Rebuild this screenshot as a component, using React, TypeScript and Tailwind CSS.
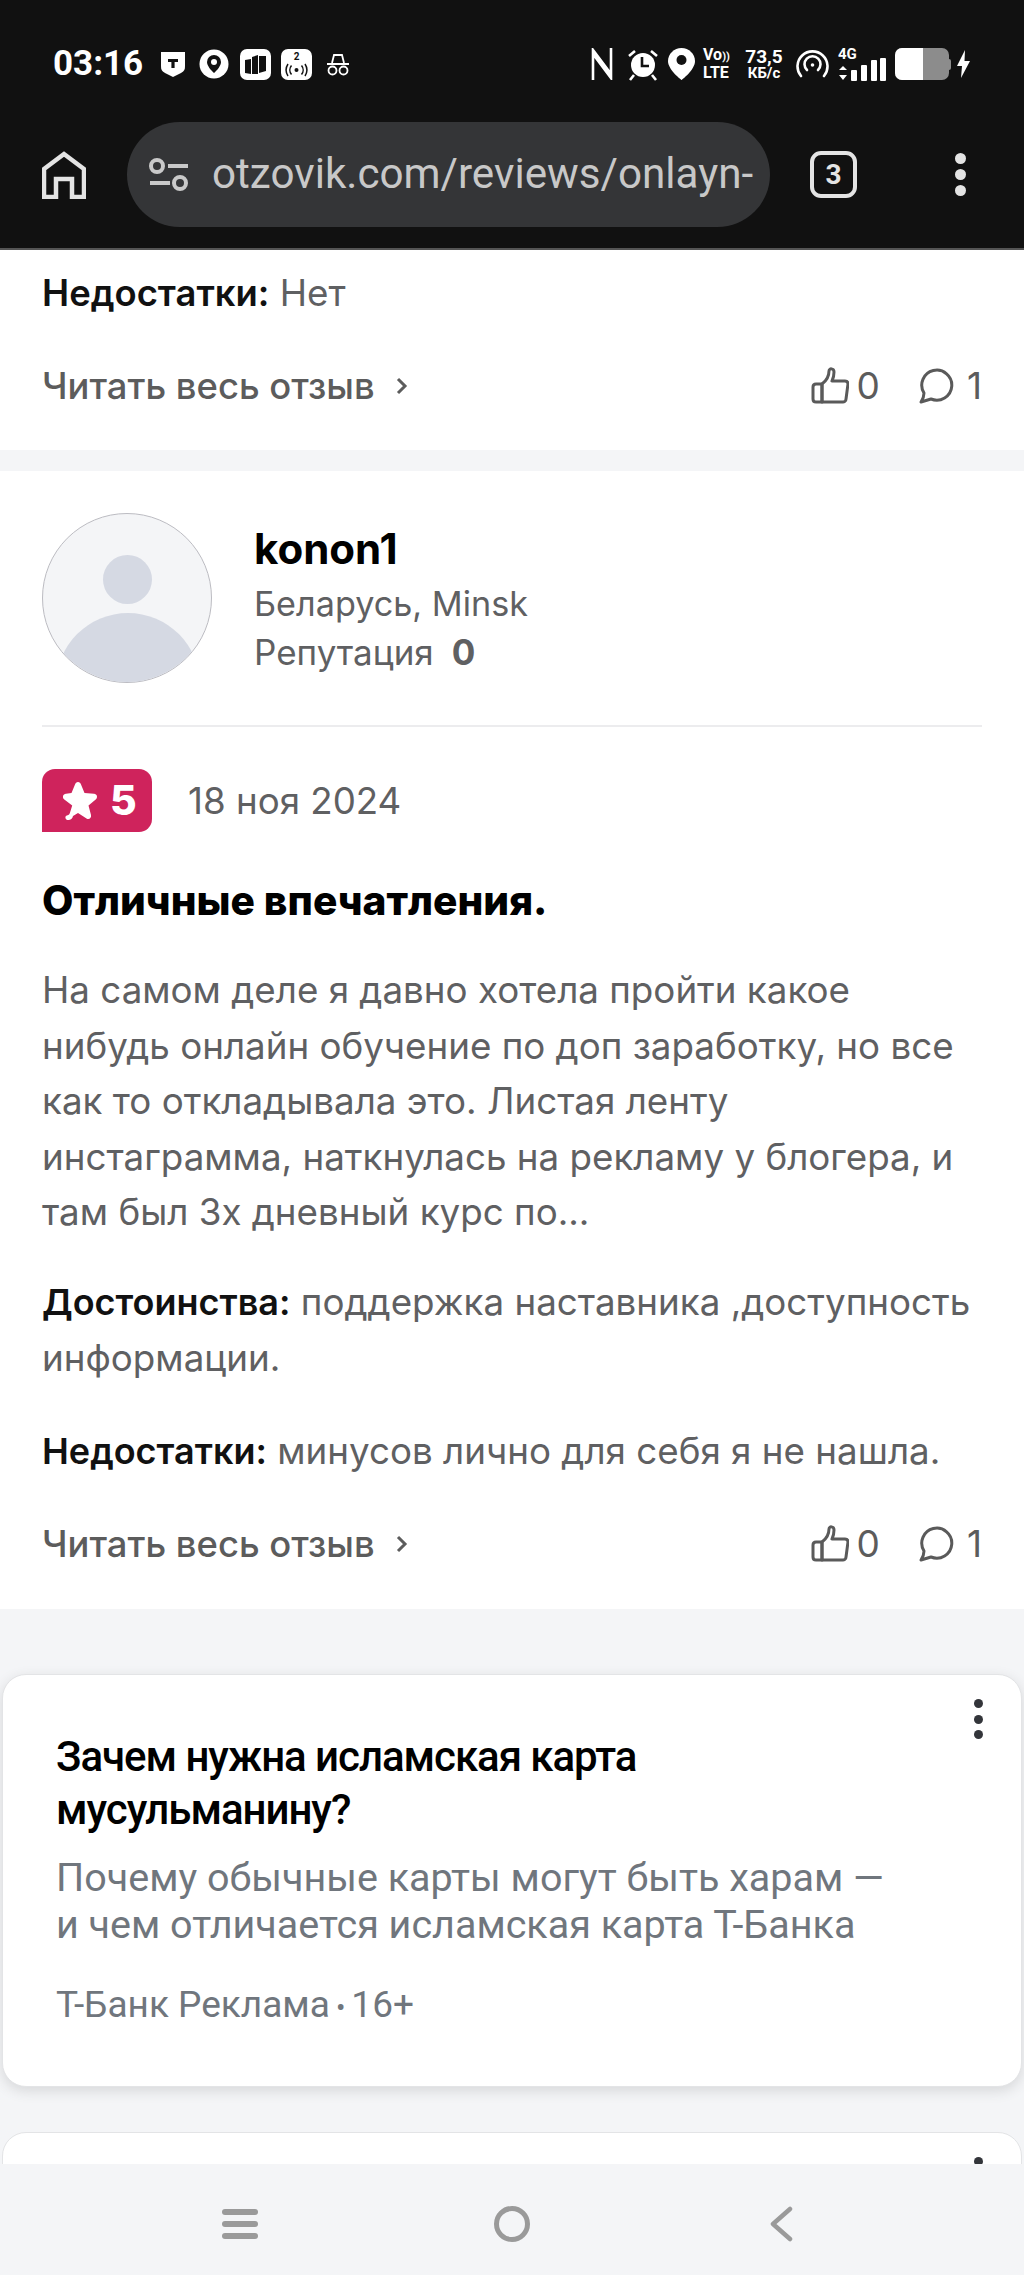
import React from 'react';

const inter = { fontFamily: 'Inter, "Noto Sans", sans-serif' };

const StatusLeftIcons = () => (
    <div className="flex items-center">
        {/* bank shield */}
        <svg width="26" height="28" viewBox="0 0 26 28" className="ml-[17px]">
            <path d="M1 2h24v14c0 4-1 5-4 7l-8 4-8-4c-3-2-4-3-4-7z" fill="#fff" />
            <path d="M8 9h10v3h-3.4v6h-3.2v-6H8z" fill="#111" />
        </svg>
        {/* location */}
        <svg width="30" height="30" viewBox="0 0 30 30" className="ml-[13px]">
            <circle cx="15" cy="15" r="14.5" fill="#fff" />
            <path d="M15 6a7 7 0 0 0-7 7c0 5 7 11 7 11s7-6 7-11a7 7 0 0 0-7-7z" fill="#111" />
            <circle cx="15" cy="13" r="3" fill="#fff" />
        </svg>
        {/* wallet tile */}
        <div className="ml-[11px] flex h-[31px] w-[31px] items-center justify-center rounded-[7px] bg-white">
            <svg width="23" height="21" viewBox="0 0 23 21">
                <path d="M1 6l6-1v15l-6-1zM8 3l6-2v19H8zM15 2h7v15l-7 2z" fill="#111" />
            </svg>
        </div>
        {/* broadcast tile */}
        <div className="relative ml-[10px] h-[31px] w-[31px] rounded-[7px] bg-white text-center">
            <span className="absolute left-0 right-0 top-[3px] text-[10px] font-bold leading-[10px] text-[#111]" style={{ fontFamily: 'Roboto' }}>2</span>
            <svg width="25" height="14" viewBox="0 0 25 14" className="absolute left-[3px] top-[14px]" fill="none" stroke="#111" strokeWidth="1.5">
                <circle cx="12.5" cy="7" r="2" fill="#111" stroke="none" />
                <path d="M7.5 2.5a7 7 0 0 0 0 9M17.5 2.5a7 7 0 0 1 0 9M4 1a11 11 0 0 0 0 12M21 1a11 11 0 0 1 0 12" />
            </svg>
        </div>
        {/* incognito */}
        <svg width="24" height="24" viewBox="0 0 24 24" className="ml-[14px]" fill="none" stroke="#fff" strokeWidth="1.8">
            <path d="M6 11l2-8h8l2 8M1 12h22" />
            <circle cx="6.5" cy="18.5" r="4" />
            <circle cx="17.5" cy="18.5" r="4" />
        </svg>
    </div>
);

const StatusRightIcons = () => (
    <div className="flex items-center">
        <svg width="22" height="32" viewBox="0 0 22 32" fill="none" stroke="#fff" strokeWidth="2.6">
            <path d="M2 32V2l18 24M20 0v30L2 6" />
        </svg>
        <svg width="32" height="33" viewBox="0 0 32 33" className="ml-[14px]">
            <circle cx="16" cy="17" r="12" fill="#fff" />
            <path d="M15 9v9h7" fill="none" stroke="#111" strokeWidth="2.6" />
            <path d="M2 8l6-5M30 8l-6-5M7 27l-4 5M25 27l4 5" stroke="#fff" strokeWidth="2.6" />
        </svg>
        <svg width="27" height="32" viewBox="0 0 27 32" className="ml-[9px]">
            <path d="M13.5 0C6 0 0 6 0 13c0 9 13.500 19 13.500 19S27 22 27 13C27 6 21 0 13.500 0z" fill="#fff" />
            <circle cx="13.500" cy="12" r="5" fill="#111" />
        </svg>
        <div className="ml-[8px] w-[28px] text-[16px] font-bold leading-[16px] text-white" style={{ fontFamily: 'Roboto' }}>
            <div>Vo<span className="text-[11px]">))</span></div>
            <div>LTE</div>
        </div>
        <div className="ml-[14px] w-[38px] whitespace-nowrap text-center font-bold text-white" style={{ fontFamily: 'Roboto' }}>
            <div className="text-[19px] leading-[19px]">73,5</div>
            <div className="text-[15px] leading-[15px]">КБ/с</div>
        </div>
        <svg width="33" height="30" viewBox="0 0 33 30" className="ml-[13px]" fill="none" stroke="#fff" strokeWidth="2.6" strokeLinecap="round">
            <path d="M5 27a15 15 0 1 1 23 0" />
            <path d="M11 21a8 8 0 1 1 11 0" />
            <circle cx="16.500" cy="16" r="1.800" fill="#fff" stroke="none" />
        </svg>
        <div className="relative ml-[9px] h-[33px] w-[48px]">
            <span className="absolute left-0 top-[-2px] text-[15px] font-bold leading-[16px] text-white" style={{ fontFamily: 'Roboto' }}>4G</span>
            <svg width="48" height="33" viewBox="0 0 48 33" className="absolute inset-0" fill="#fff">
                <path d="M5 18l4 4H1zM5 32l-4-5h8z" />
                <rect x="13" y="22" width="6" height="11" rx="1" />
                <rect x="23" y="17" width="6" height="16" rx="1" />
                <rect x="33" y="12" width="6" height="21" rx="1" />
                <rect x="42" y="10" width="6" height="23" rx="1" />
            </svg>
        </div>
        <div className="ml-[9px] flex h-[32px] w-[54px] overflow-hidden rounded-[7px] bg-[#8c8c8c]">
            <div className="h-full w-[28px] bg-white" />
        </div>
        <div className="h-[11px] w-[2px] rounded-r-sm bg-[#8c8c8c]" />
        <svg width="13" height="28" viewBox="0 0 13 28" className="ml-[6px]" fill="#fff">
            <path d="M8 0L0 16h5l-1 12 9-17H7.500z" />
        </svg>
    </div>
);

const BrowserBar = () => (
    <header className="h-[250px] shrink-0 border-b-2 border-[#555] bg-[#111]">
        <div className="flex h-[122px] items-start justify-between pl-[53px] pr-[54px] pt-[47px]">
            <div className="flex h-[34px] items-center">
                <span className="text-[35px] font-bold text-white" style={{ fontFamily: 'Roboto' }}>03:16</span>
                <StatusLeftIcons />
            </div>
            <StatusRightIcons />
        </div>
        <div className="flex items-center">
            <svg width="44" height="48" viewBox="0 0 44 48" className="ml-[42px] shrink-0" fill="none" stroke="#e4e4e4" strokeWidth="4.500">
                <path d="M2 46V18L22 3l20 15v28H30V28H14v18z" />
            </svg>
            <div className="ml-[41px] flex h-[105px] w-[643px] shrink-0 items-center rounded-full bg-[#343537] pl-[22px]">
                <svg width="40" height="34" viewBox="0 0 40 34" className="shrink-0" fill="none" stroke="#c9c9c9" strokeWidth="4">
                    <circle cx="8" cy="8" r="6" />
                    <circle cx="31" cy="25" r="6" />
                    <path d="M19 8h20M1 25h20" />
                </svg>
                <span className="ml-[23px] whitespace-nowrap text-[42.200px] leading-none text-[#c8c8c8]" style={{ fontFamily: 'Roboto' }}>
                    otzovik.com/reviews/onlayn-
                </span>
            </div>
            <div className="ml-[40px] flex h-[47px] w-[47px] shrink-0 items-center justify-center rounded-[11px] border-[4.500px] border-[#e4e4e4]">
                <span className="text-[28px] font-bold leading-none text-[#e4e4e4]" style={{ fontFamily: 'Roboto' }}>3</span>
            </div>
            <div className="ml-[98px] flex flex-col gap-[5px]">
                <span className="h-[11px] w-[11px] rounded-full bg-[#e4e4e4]" />
                <span className="h-[11px] w-[11px] rounded-full bg-[#e4e4e4]" />
                <span className="h-[11px] w-[11px] rounded-full bg-[#e4e4e4]" />
            </div>
        </div>
    </header>
);

const ThumbIcon = () => (
    <svg width="38" height="38" viewBox="0 0 38 38" fill="none" stroke="#5a5a5a" strokeWidth="3" strokeLinejoin="round">
        <path d="M11 17c4-3 7-8 7-13 0-3 5-3 5 1 0 4-1 7-2 9h13c2 0 3 1 3 3l-2 15c0 2-2 3-3 3H11z" />
        <path d="M11 17H5c-2 0-3 1-3 3v12c0 2 1 3 3 3h6z" />
    </svg>
);

const CommentIcon = () => (
    <svg width="36" height="36" viewBox="0 0 36 36" fill="none" stroke="#5a5a5a" strokeWidth="3" strokeLinejoin="round">
        <path d="M6 25a15 15 0 1 1 7 6l-10 3c2-3 3-6 3-9z" />
    </svg>
);

const ReviewFooter = () => (
    <div className="flex items-center justify-between text-[#5c5c5c]">
        <div className="flex items-center">
            <span className="text-[36.400px] font-medium leading-[44px]">Читать весь отзыв</span>
            <svg width="14" height="22" viewBox="0 0 14 22" className="ml-[20px]" fill="none" stroke="#5c5c5c" strokeWidth="3">
                <path d="M3 4l7 7-7 7" />
            </svg>
        </div>
        <div className="flex items-center text-[37px] leading-[44px]">
            <ThumbIcon />
            <span className="ml-[8px]">0</span>
            <span className="ml-[38px] flex items-center"><CommentIcon /></span>
            <span className="ml-[13px]">1</span>
        </div>
    </div>
);

const Avatar = () => (
    <div className="relative h-[170px] w-[170px] shrink-0 overflow-hidden rounded-full border border-[#bcbcc2] bg-[#f4f5f7]">
        <span className="absolute left-[60px] top-[41px] h-[49px] w-[49px] rounded-full bg-[#d5d9e3]" />
        <span className="absolute left-[13px] top-[99px] h-[144px] w-[144px] rounded-full bg-[#d5d9e3]" />
    </div>
);

const Review = () => (
    <article className="mt-[21px] h-[1138px] bg-white px-[42px] pb-[41px] pt-[42px]">
        <div className="flex h-[214px] items-start border-b-2 border-[#ececee]">
            <Avatar />
            <div className="ml-[42px] pt-[14px]">
                <div className="text-[42px] font-bold leading-[44px] text-black">konon1</div>
                <div className="mt-[11px] text-[34.200px] leading-[44px] text-[#5f6062]">Беларусь, Minsk</div>
                <div className="mt-[4px] text-[35px] leading-[44px] text-[#5f6062]">
                    Репутация <span className="ml-[8px] font-bold">0</span>
                </div>
            </div>
        </div>
        <div className="mt-[42px] flex items-center">
            <div className="flex h-[63px] w-[110px] items-center rounded-[13px] rounded-bl-none bg-[#cf235c] pl-[15px]">
                <svg width="42" height="40" viewBox="0 0 42 40" fill="#fff" className="shrink-0">
                    <path d="M21 1c1.500 0 2.500 1 3 2.500L27.500 12l9.500.7c3 .3 4 3.500 2 5.500l-7.500 6.300 2.500 9.500c.7 3-2 5-4.500 3.500L21 32l-5 3c-.5 3-3 4.500-5.500 4-2.500-.6-2.800-4-.5-4.500 1.800-.3 2.800-1.500 3.200-3.500l2-6.500L7 18.200c-2-2-1-5.200 2-5.500l5.500-.7L18 3.500c.5-1.500 1.500-2.500 3-2.500z" />
                </svg>
                <span className="ml-[11px] text-[41px] font-extrabold leading-none text-white">5</span>
            </div>
            <span className="ml-[36px] text-[36.700px] leading-[44px] text-[#5f6062]">18 ноя 2024</span>
        </div>
        <h2 className="mt-[44px] text-[40.700px] font-extrabold leading-[50px] text-black">Отличные впечатления.</h2>
        <p className="mt-[36px] text-[36.750px] leading-[55.500px] text-[#5f6062]">
            На самом деле я давно хотела пройти какое<br />
            нибудь онлайн обучение по доп заработку, но все<br />
            как то откладывала это. Листая ленту<br />
            инстаграмма, наткнулась на рекламу у блогера, и<br />
            там был 3х дневный курс по...
        </p>
        <p className="mt-[34px] text-[36.750px] leading-[55.500px] text-[#5f6062]">
            <b className="text-[36px] font-semibold text-[#111]">Достоинства:</b> поддержка наставника ,доступность<br />
            информации.
        </p>
        <p className="mt-[37px] text-[36.750px] leading-[55.500px] text-[#5f6062]">
            <b className="text-[36px] font-semibold text-[#111]">Недостатки:</b> минусов лично для себя я не нашла.
        </p>
        <div className="mt-[43px]">
            <ReviewFooter />
        </div>
    </article>
);

const AdDots = () => (
    <div className="absolute right-[38px] top-[24px] flex flex-col gap-[6.500px]">
        <span className="h-[9px] w-[9px] rounded-full bg-[#33353a]" />
        <span className="h-[9px] w-[9px] rounded-full bg-[#33353a]" />
        <span className="h-[9px] w-[9px] rounded-full bg-[#33353a]" />
    </div>
);

const AdCard = () => (
    <section className="relative mx-[2px] mt-[65px] h-[413px] rounded-[24px] border border-[#e3e4e6] bg-white pl-[53px] pt-[55px] shadow-[0_4px_14px_rgba(0,0,0,0.12)]" style={{ fontFamily: 'Roboto, sans-serif' }}>
        <AdDots />
        <h3 className="text-[42px] font-medium leading-[53px] tracking-[-1.040px] text-black">
            Зачем нужна исламская карта<br />
            мусульманину?
        </h3>
        <p className="mt-[18px] text-[39.500px] leading-[47px] text-[#70767d]">
            Почему обычные карты могут быть харам —<br />
            и чем отличается исламская карта Т-Банка
        </p>
        <div className="mt-[35px] text-[37px] leading-[44px] text-[#70767d]">
            Т-Банк Реклама<span className="mx-[6px] text-[28px]">•</span>16+
        </div>
    </section>
);

const NavBar = () => (
    <nav className="flex h-[111px] shrink-0 items-center bg-[#f4f5f7] pt-[8px]">
        <div className="ml-[222px] flex flex-col gap-[6px]">
            <span className="h-[6px] w-[36px] rounded-full bg-[#9a9a9a]" />
            <span className="h-[6px] w-[36px] rounded-full bg-[#9a9a9a]" />
            <span className="h-[6px] w-[36px] rounded-full bg-[#9a9a9a]" />
        </div>
        <span className="ml-[236px] h-[36px] w-[36px] rounded-full border-[5px] border-[#9a9a9a]" />
        <svg width="24" height="36" viewBox="0 0 24 36" className="ml-[239px]" fill="none" stroke="#9a9a9a" strokeWidth="4.500" strokeLinecap="round" strokeLinejoin="round">
            <path d="M21 3L4 18l17 15" />
        </svg>
    </nav>
);

const App: React.FC = () => {
    return (
        <div className="flex h-[2275px] w-[1024px] flex-col overflow-hidden bg-[#f4f5f7]" style={inter}>
            <BrowserBar />
            <main className="min-h-0 flex-1 overflow-hidden">
                {/* tail of the previous review */}
                <div className="h-[200px] bg-white px-[42px] pt-[15px]">
                    <p className="text-[36.750px] leading-[56px] text-[#5f6062]">
                        <b className="text-[36.400px] font-semibold text-[#111]">Недостатки:</b> Нет
                    </p>
                    <div className="mt-[43px]">
                        <ReviewFooter />
                    </div>
                </div>
                <Review />
                <AdCard />
                <section className="relative mx-[2px] mt-[45px] h-[200px] rounded-[24px] border border-[#e3e4e6] bg-white">
                    <AdDots />
                </section>
            </main>
            <NavBar />
        </div>
    );
};

export default App;
